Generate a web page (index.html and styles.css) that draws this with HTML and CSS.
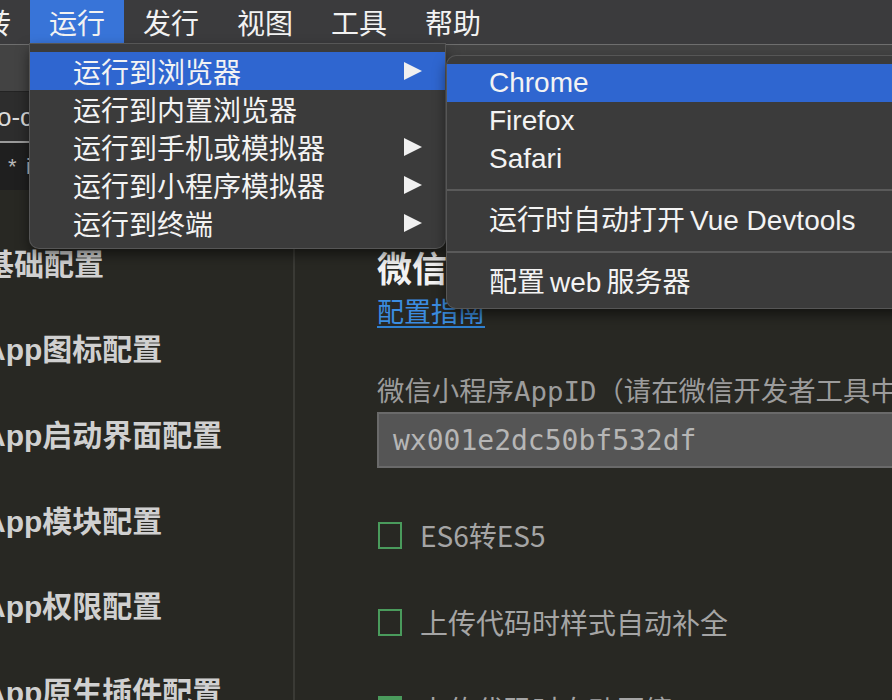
FILE: index.html
```html
<!DOCTYPE html>
<html lang="zh-CN">
<head>
<meta charset="utf-8">
<title>HBuilderX - 运行</title>
<link rel="stylesheet" href="styles.css">
</head>
<body>
  <div class="menubar">
    <div class="mb-item first">跳转</div>
    <div class="mb-item active">运行</div>
    <div class="mb-item">发行</div>
    <div class="mb-item">视图</div>
    <div class="mb-item">工具</div>
    <div class="mb-item">帮助</div>
  </div>
  <div class="toolbar"></div>
  <div class="tabbar"><div class="tab">o-c</div></div>
  <div class="subbar"><span class="star">*</span><span class="fname">index</span></div>

  <div class="main">
    <div class="side">
      <div class="side-item">基础配置</div>
      <div class="side-item">App图标配置</div>
      <div class="side-item">App启动界面配置</div>
      <div class="side-item">App模块配置</div>
      <div class="side-item">App权限配置</div>
      <div class="side-item">App原生插件配置</div>
    </div>
    <div class="content">
      <h2 class="heading">微信小程序配置</h2>
      <div><span class="link">配置指南</span></div>
      <div class="label">微信小程序AppID（请在微信开发者工具中获取）</div>
      <div class="input">wx001e2dc50bf532df</div>
      <div class="check-row"><span class="cb"></span><span class="cb-label">ES6转ES5</span></div>
      <div class="check-row"><span class="cb"></span><span class="cb-label">上传代码时样式自动补全</span></div>
      <div class="check-row"><span class="cb checked"></span><span class="cb-label">上传代码时自动压缩</span></div>
    </div>
  </div>

  <div class="dropdown">
    <div class="dd-item hl">运行到浏览器<span class="arrow"></span></div>
    <div class="dd-item">运行到内置浏览器</div>
    <div class="dd-item">运行到手机或模拟器<span class="arrow"></span></div>
    <div class="dd-item">运行到小程序模拟器<span class="arrow"></span></div>
    <div class="dd-item">运行到终端<span class="arrow"></span></div>
  </div>

  <div class="submenu">
    <div class="sm-item hl">Chrome</div>
    <div class="sm-item">Firefox</div>
    <div class="sm-item">Safari</div>
    <div class="sep"></div>
    <div class="sm-item">运行时自动打开<span class="gap"></span>Vue Devtools</div>
    <div class="sep"></div>
    <div class="sm-item">配置<span class="gap"></span>web<span class="gap"></span>服务器</div>
  </div>
</body>
</html>
```

FILE: styles.css
```css
* { box-sizing: border-box; }
html, body { margin: 0; padding: 0; }
body {
  width: 892px;
  height: 700px;
  overflow: hidden;
  position: relative;
  background: #282823;
  font-family: "Liberation Sans", "Noto Sans CJK SC", sans-serif;
}

/* menu bar */
.menubar {
  height: 44px;
  background: #3b3b3d;
  display: flex;
  color: #f2f2f2;
  font-size: 28px;
  font-family: "Noto Sans CJK SC", sans-serif;
}
.mb-item {
  flex: 0 0 94px;
  display: flex;
  align-items: center;
  justify-content: center;
  line-height: 1;
}
.mb-item.first { margin-left: -64px; }
.mb-item.active { background: #3874d8; }

/* window chrome behind the menus */
.toolbar {
  height: 48px;
  background: #434343;
  border-top: 1px solid #6e6e6e;
  border-bottom: 1px solid #232323;
}
.tabbar {
  height: 51px;
  background: #2d2d2d;
  display: flex;
  align-items: stretch;
}
.tab {
  width: 200px;
  margin-left: -3px;
  padding-top: 12px;
  color: #dcdcdc;
  font-size: 26px;
  line-height: 1;
  border-bottom: 2px solid #9a9a9a;
}
.subbar {
  height: 47px;
  background: #1f1f1f;
  display: flex;
  align-items: center;
  color: #b8b8b8;
  font-size: 22px;
  line-height: 1;
}
.star { margin-left: 8px; width: 18px; }

/* main area */
.main {
  display: grid;
  grid-template-columns: 295px 1fr;
  height: 510px;
}
.side {
  border-right: 2px solid #3a3a35;
  padding-top: 32px;
  overflow: hidden;
}
.side-item {
  height: 85.6px;
  display: flex;
  align-items: center;
  margin-left: -16px;
  font-size: 30px;
  font-weight: bold;
  color: #d0d0d0;
  white-space: nowrap;
  line-height: 1;
}
.content {
  padding: 56px 0 0 82px;
  overflow: hidden;
  white-space: nowrap;
}
.heading {
  margin: 0;
  font-size: 35px;
  line-height: 42px;
  font-weight: bold;
  color: #f2f2f2;
  font-family: "Noto Sans CJK SC", sans-serif;
}
.link {
  display: inline-block;
  margin-top: 8px;
  font-size: 27px;
  line-height: 30px;
  color: #3b8de0;
  border-bottom: 2px solid #2f80d0;
  font-family: "Noto Sans CJK SC", sans-serif;
}
.label {
  margin-top: 48px;
  font-size: 27.4px;
  line-height: 32px;
  color: #9c9c9c;
  font-family: "DejaVu Sans Mono", "Noto Sans CJK SC", monospace;
}
.input {
  margin-top: 4px;
  height: 56px;
  background: #555555;
  border: 2px solid #6a6a6a;
  border-right: none;
  padding-left: 14px;
  display: flex;
  align-items: center;
  font-family: "DejaVu Sans Mono", monospace;
  font-size: 28px;
  color: #b6b6b6;
}
.check-row {
  margin-top: 47px;
  height: 40px;
  display: flex;
  align-items: center;
}
.cb {
  flex: 0 0 24px;
  height: 27px;
  border: 2px solid #4a9b5c;
  margin-left: 1px;
}
.cb.checked { background: #4a9b5c; }
.cb-label {
  margin-left: 18px;
  font-size: 28px;
  line-height: 1;
  color: #a5a5a5;
  font-family: "Noto Sans CJK SC", sans-serif;
}

/* dropdown menus (overlays) */
.dropdown {
  position: absolute;
  left: 30px;
  top: 44px;
  width: 415px;
  background: #3b3b3b;
  border-radius: 0 0 9px 9px;
  padding: 8px 0 6px;
  box-shadow: 0 0 0 1px #565656, 0 6px 14px rgba(0, 0, 0, 0.55);
}
.dd-item {
  height: 38px;
  display: flex;
  align-items: center;
  padding: 0 23px 0 43px;
  font-size: 28px;
  line-height: 1;
  color: #f3f3f3;
  font-family: "Noto Sans CJK SC", sans-serif;
}
.hl { background: #2f66d0; }
.arrow {
  margin-left: auto;
  width: 0;
  height: 0;
  border-left: 18px solid #f0f0f0;
  border-top: 9.5px solid transparent;
  border-bottom: 9.5px solid transparent;
}
.submenu {
  position: absolute;
  left: 447px;
  top: 56px;
  width: 470px;
  background: #3b3b3b;
  border-radius: 9px 0 0 9px;
  padding: 8px 0 6px;
  box-shadow: 0 0 0 1px #565656, 0 6px 14px rgba(0, 0, 0, 0.55);
}
.sm-item {
  height: 38px;
  display: flex;
  align-items: center;
  padding-left: 42px;
  font-size: 28px;
  line-height: 1;
  color: #f3f3f3;
  white-space: nowrap;
}
.gap { display: inline-block; width: 5px; }
.sep {
  height: 2px;
  margin: 11px 0;
  background: #5a5a5a;
}
```
